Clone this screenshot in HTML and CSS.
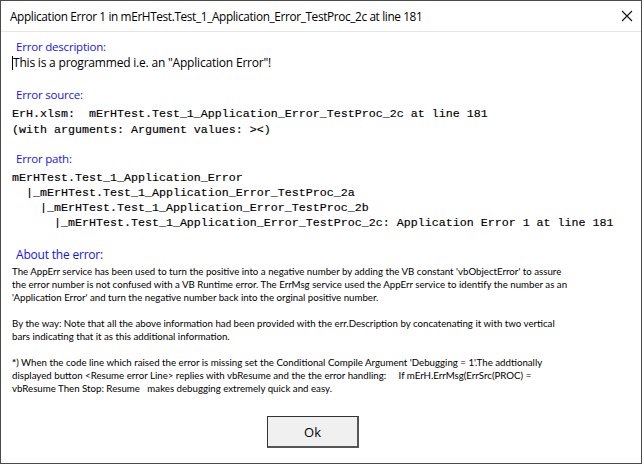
FILE: index.html
```html
<!DOCTYPE html>
<html>
<head>
<meta charset="utf-8">
<link rel="stylesheet" href="styles.css">
</head>
<body>
<div class="window">
  <div class="titlebar">
    <span class="title">Application Error 1 in mErHTest.Test_1_Application_Error_TestProc_2c at line 181</span>
    <svg class="close" width="12" height="12" viewBox="0 0 12 12"><path d="M1 1 L11 11 M11 1 L1 11" stroke="#111" stroke-width="1.1" fill="none"/></svg>
  </div>
  <div class="content">
    <div class="label">Error description:</div>
    <div class="desc"><span class="caret"></span>This is a programmed i.e. an "Application Error"!</div>

    <div class="label gap">Error source:</div>
    <pre class="mono src">ErH.xlsm:  mErHTest.Test_1_Application_Error_TestProc_2c at line 181
(with arguments: Argument values: &gt;&lt;)</pre>

    <div class="label gap2">Error path:</div>
    <pre class="mono path">mErHTest.Test_1_Application_Error
  |_mErHTest.Test_1_Application_Error_TestProc_2a
    |_mErHTest.Test_1_Application_Error_TestProc_2b
      |_mErHTest.Test_1_Application_Error_TestProc_2c: Application Error 1 at line 181</pre>

    <div class="label about-label">About the error:</div>
    <div class="about">
      <p>The AppErr service has been used to turn the positive into a negative number by adding the VB constant 'vbObjectError' to assure<br>the error number is not confused with a VB Runtime error. The ErrMsg service used the AppErr service to identify the number as an<br>'Application Error' and turn the negative number back into the orginal positive number.</p>
      <p>By the way: Note that all the above information had been provided with the err.Description by concatenating it with two vertical<br>bars indicating that it as this additional information.</p>
      <p><b>*</b>) When the code line which raised the error is missing set the Conditional Compile Argument 'Debugging = 1'.The addtionally<br>displayed button &lt;Resume error Line&gt; replies with vbResume and the the error handling:&nbsp;&nbsp;&nbsp;&nbsp; If mErH.ErrMsg(ErrSrc(PROC) =<br>vbResume Then Stop: Resume &nbsp; makes debugging extremely quick and easy.</p>
    </div>
    <div class="buttons">
      <button class="ok">Ok</button>
    </div>
  </div>
</div>
</body>
</html>
```
FILE: styles.css
```css
html, body {
  margin: 0;
  padding: 0;
  background: #ffffff;
}
.window {
  width: 640px;
  height: 462px;
  border: 1px solid #4a4a4a;
  background: #ffffff;
  box-sizing: content-box;
  display: flex;
  flex-direction: column;
}
.titlebar {
  height: 30px;
  border-bottom: 1px solid #e6e6e6;
  display: flex;
  align-items: center;
  justify-content: space-between;
  padding: 0 8px 0 9px;
}
.title {
  font-family: "Open Sans", sans-serif;
  font-size: 11.8px;
  letter-spacing: -0.36px;
  color: #000;
  white-space: nowrap;
}
.close {
  display: block;
}
.content {
  padding: 7px 0 0 11px;
  display: flex;
  flex-direction: column;
}
.label {
  font-family: "Open Sans", sans-serif;
  font-size: 11.5px;
  letter-spacing: -0.2px;
  color: #1414f0;
  line-height: 16px;
  height: 16px;
  padding-left: 4px;
  white-space: nowrap;
}
.gap { margin-top: 16px; }
.gap2 { margin-top: 13px; }
.desc {
  font-family: "Open Sans", sans-serif;
  font-size: 12px;
  letter-spacing: -0.2px;
  line-height: 16px;
  color: #000;
  white-space: nowrap;
  display: flex;
  align-items: center;
}
.caret {
  display: inline-block;
  width: 1px;
  height: 14px;
  background: #000;
}
.mono {
  font-family: "Liberation Mono", "Courier New", monospace;
  font-size: 11.67px;
  color: #000;
  margin: 0;
  white-space: pre;
  -webkit-text-stroke: 0.15px #000;
}
.src {
  line-height: 16px;
  margin-top: 3px;
}
.path {
  line-height: 15px;
  margin-top: 4px;
}
.about-label {
  margin-top: 16px;
  font-size: 12px;
}
.about {
  font-family: "Lato", sans-serif;
  font-size: 9.7px;
  line-height: 13px;
  color: #000;
  margin-top: 2px;
  white-space: nowrap;
}
.about p {
  margin: 0 0 13px 0;
}
.about p:last-child {
  margin-bottom: 0;
}
.buttons {
  display: flex;
  justify-content: flex-start;
  margin-top: 21px;
  padding-left: 255px;
}
.ok {
  width: 92px;
  height: 32px;
  border: 1px solid #333;
  border-right: 2px solid #555;
  border-bottom: 2px solid #555;
  background: #f0f0f0;
  font-family: "Open Sans", sans-serif;
  font-size: 13px;
  color: #000;
  padding: 0;
}
```
